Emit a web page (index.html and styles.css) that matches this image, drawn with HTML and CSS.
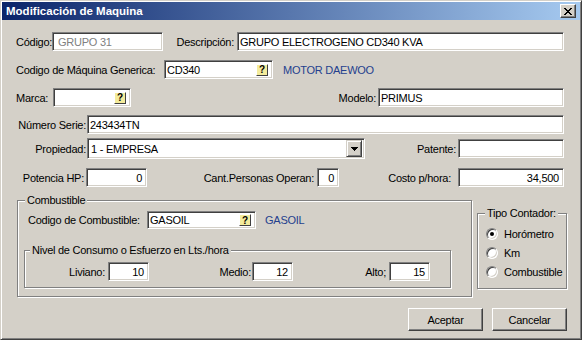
FILE: index.html
```html
<!DOCTYPE html>
<html>

<head>
  <meta charset="utf-8">
  <link rel="stylesheet" href="styles.css">
</head>

<body>
  <div class="window">
    <div class="titlebar">
      <span class="title">Modificación de Maquina</span>
      <span class="close">
        <svg width="8" height="7" viewBox="0 0 8 7" shape-rendering="crispEdges">
          <path d="M0 0h2v1H0z M6 0h2v1H6z M1 1h2v1H1z M5 1h2v1H5z M2 2h4v1H2z M3 3h2v1H3z M2 4h4v1H2z M1 5h2v1H1z M5 5h2v1H5z M0 6h2v1H0z M6 6h2v1H6z" />
        </svg>
      </span>
    </div>

    <div class="content">
      <!-- datos generales -->
      <div class="row r1 fill">
        <span class="lbl l-codigo">Código:</span>
        <div class="edit dis e-codigo">GRUPO 31</div>
        <span class="lbl right l-desc">Descripción:</span>
        <div class="edit grow">GRUPO ELECTROGENO CD340 KVA</div>
      </div>

      <div class="row r2">
        <span class="lbl l-generica">Codigo de Máquina Generica:</span>
        <div class="edit e-generica"><span class="val">CD340</span><span class="help">?</span></div>
        <span class="link">MOTOR DAEWOO</span>
      </div>

      <div class="row r3 fill">
        <span class="lbl l-marca">Marca:</span>
        <div class="edit e-marca"><span class="val"></span><span class="help">?</span></div>
        <span class="lbl right push l-modelo">Modelo:</span>
        <div class="edit e-modelo">PRIMUS</div>
      </div>

      <div class="row r4 fill">
        <span class="lbl right l-serie">Número Serie:</span>
        <div class="edit grow">243434TN</div>
      </div>

      <div class="row r5 fill">
        <span class="lbl right l-serie">Propiedad:</span>
        <div class="combo">
          <span class="val">1 - EMPRESA</span>
          <span class="drop">
            <svg width="7" height="4" viewBox="0 0 7 4" shape-rendering="crispEdges">
              <path d="M0 0h7v1H0z M1 1h5v1H1z M2 2h3v1H2z M3 3h1v1H3z" />
            </svg>
          </span>
        </div>
        <span class="lbl right push l-patente">Patente:</span>
        <div class="edit e-patente"></div>
      </div>

      <div class="row r6 fill">
        <span class="lbl right l-potencia">Potencia HP:</span>
        <div class="edit num e-potencia">0</div>
        <span class="lbl right l-cant">Cant.Personas Operan:</span>
        <div class="edit num e-cant">0</div>
        <span class="lbl right l-costo">Costo p/hora:</span>
        <div class="edit num e-patente">34,500</div>
      </div>

      <!-- combustible y contador -->
      <div class="groups">
        <div class="group g-comb">
          <span class="caption">Combustible</span>
          <div class="row r-comb">
            <span class="lbl l-comb">Codigo de Combustible:</span>
            <div class="edit e-generica"><span class="val">GASOIL</span><span class="help">?</span></div>
            <span class="link l-gasoil">GASOIL</span>
          </div>

          <div class="group g-nivel">
            <span class="caption">Nivel de Consumo o Esfuerzo en Lts./hora</span>
            <div class="row">
              <span class="lbl right l-liviano">Liviano:</span>
              <div class="edit num e-small">10</div>
              <span class="lbl right l-medio">Medio:</span>
              <div class="edit num e-small">12</div>
              <span class="lbl right l-alto">Alto;</span>
              <div class="edit num e-small">15</div>
            </div>
          </div>
        </div>

        <div class="group g-tipo">
          <span class="caption">Tipo Contador:</span>
          <div class="radio-row"><span class="radio on"></span>Horómetro</div>
          <div class="radio-row"><span class="radio"></span>Km</div>
          <div class="radio-row"><span class="radio"></span>Combustible</div>
        </div>
      </div>

      <div class="buttons">
        <button class="btn">Aceptar</button>
        <button class="btn">Cancelar</button>
      </div>
    </div>
  </div>
</body>

</html>
```

FILE: styles.css
```css
* {
  box-sizing: border-box;
}

body {
  margin: 0;
  background-color: #d4d0c8;
  font-family: "Liberation Sans", Arial, sans-serif;
  font-size: 11px;
  letter-spacing: -0.25px;
  color: #000;
}

.window {
  width: 582px;
  height: 340px;
  display: flex;
  flex-direction: column;
  padding: 1px;
  background-color: #d4d0c8;
  border: 1px solid;
  border-color: #d4d0c8 #404040 #404040 #d4d0c8;
  box-shadow: inset 1px 1px #fff, inset -1px -1px #808080;
}

.titlebar {
  height: 18px;
  display: flex;
  align-items: center;
  justify-content: space-between;
  padding: 0 4px 0 4px;
  background: linear-gradient(to right, #0a246a, #a6caf0);
}

.title {
  color: #fff;
  font-weight: bold;
  font-size: 11.5px;
  letter-spacing: 0;
}

.close {
  width: 16px;
  height: 14px;
  display: flex;
  align-items: center;
  justify-content: center;
  background-color: #d4d0c8;
  border: 1px solid;
  border-color: #fff #404040 #404040 #fff;
  box-shadow: inset -1px -1px #808080;
}

.content {
  flex: 1;
  display: flex;
  flex-direction: column;
  padding: 0 14px;
}

.row {
  display: flex;
  align-items: center;
  height: 19px;
  flex-shrink: 0;
}

.fill {
  margin-right: 2px;
}

.r1 { margin-top: 12px; }
.r2 { margin-top: 9px; }
.r3 { margin-top: 9px; }
.r4 { margin-top: 8px; }
.r5 { margin-top: 4px; height: 21px; }
.r6 { margin-top: 9px; }

.lbl {
  flex-shrink: 0;
  white-space: nowrap;
}

.right {
  text-align: right;
}

.push {
  margin-left: auto;
}

.link {
  color: #24408e;
  margin-left: 10px;
}

/* cajas de texto hundidas */
.edit {
  height: 19px;
  display: flex;
  align-items: center;
  flex-shrink: 0;
  padding: 0 2px;
  background-color: #fff;
  border: 1px solid;
  border-color: #808080 #fff #fff #808080;
  box-shadow: inset 1px 1px #404040, inset -1px -1px #d4d0c8;
  white-space: nowrap;
  overflow: hidden;
}

.edit .val {
  flex: 1;
}

.grow {
  flex: 1;
}

.num {
  justify-content: flex-end;
  padding-right: 4px;
}

.dis {
  color: #808080;
  padding-left: 5px;
}

.help {
  width: 12px;
  height: 12px;
  display: flex;
  align-items: center;
  justify-content: center;
  margin-right: 2px;
  background-color: #f4ec9c;
  border: 1px solid;
  border-color: #fff #404040 #404040 #fff;
  font-weight: bold;
  font-size: 10px;
  letter-spacing: 0;
}

.l-codigo { width: 36px; }
.e-codigo { width: 111px; }
.l-desc { width: 61px; margin-left: 13px; padding-right: 3px; }
.l-generica { width: 148px; }
.e-generica { width: 109px; }
.l-marca { width: 37px; }
.e-marca { width: 78px; }
.l-modelo { padding-right: 2px; }
.e-modelo { width: 186px; }
.l-serie { width: 71px; padding-right: 1px; }
.l-patente { padding-right: 2px; }
.e-patente { width: 106px; }
.l-potencia { width: 70px; padding-right: 2px; }
.e-potencia { width: 61px; }
.l-cant { width: 170px; padding-right: 3px; }
.e-cant { width: 22px; }
.l-costo { width: 119px; padding-right: 7px; }

.combo {
  width: 278px;
  height: 21px;
  display: flex;
  align-items: center;
  padding: 0 2px 0 3px;
  background-color: #fff;
  border: 1px solid;
  border-color: #808080 #fff #fff #808080;
  box-shadow: inset 1px 1px #404040, inset -1px -1px #d4d0c8;
}

.combo .val {
  flex: 1;
}

.drop {
  width: 16px;
  height: 17px;
  display: flex;
  align-items: center;
  justify-content: center;
  background-color: #d4d0c8;
  border: 1px solid;
  border-color: #d4d0c8 #404040 #404040 #d4d0c8;
  box-shadow: inset 1px 1px #fff, inset -1px -1px #808080;
}

/* marcos */
.groups {
  display: flex;
  align-items: flex-start;
  margin-top: 13px;
}

.group {
  position: relative;
  flex-shrink: 0;
  border: 1px solid #808080;
  box-shadow: inset 1px 1px #fff, 1px 1px #fff;
}

.caption {
  position: absolute;
  top: -7px;
  left: 7px;
  padding: 0 2px;
  line-height: 13px;
  background-color: #d4d0c8;
  white-space: nowrap;
}

.g-comb {
  width: 455px;
  height: 97px;
  margin-left: 1px;
  padding: 10px 0 0 6px;
}

.r-comb {
  padding-left: 4px;
  height: 18px;
}

.l-comb { width: 119px; }
.r-comb .edit { height: 18px; }
.l-gasoil { margin-left: 9px; }

.g-nivel {
  width: 427px;
  height: 38px;
  margin-top: 21px;
  padding-top: 11px;
}

.g-nivel .caption {
  left: 5px;
}

.l-liviano { width: 83px; padding-right: 3px; }
.l-medio { width: 103px; padding-right: 1px; }
.l-alto { width: 96px; padding-right: 3px; }
.e-small { width: 41px; }

.g-tipo {
  width: 90px;
  height: 76px;
  margin-left: 5px;
  margin-top: 13px;
  padding: 10px 0 0 8px;
}

.radio-row {
  height: 19px;
  display: flex;
  align-items: center;
}

.radio {
  width: 12px;
  height: 12px;
  margin-right: 6px;
  border-radius: 50%;
  background-color: #fff;
  border: 1px solid;
  border-color: #808080 #fff #fff #808080;
  box-shadow: inset 1px 1px #404040, inset -1px -1px #d4d0c8;
  display: flex;
  align-items: center;
  justify-content: center;
}

.radio.on::after {
  content: "";
  width: 4px;
  height: 4px;
  border-radius: 50%;
  background-color: #000;
}

/* botones */
.buttons {
  display: flex;
  justify-content: flex-end;
  gap: 9px;
  margin-top: 11px;
  margin-right: -1px;
}

.btn {
  width: 75px;
  height: 23px;
  padding: 0;
  font-family: inherit;
  font-size: 11px;
  letter-spacing: -0.25px;
  color: #000;
  background-color: #d4d0c8;
  border: 1px solid;
  border-color: #fff #404040 #404040 #fff;
  box-shadow: inset -1px -1px #808080;
}
```
